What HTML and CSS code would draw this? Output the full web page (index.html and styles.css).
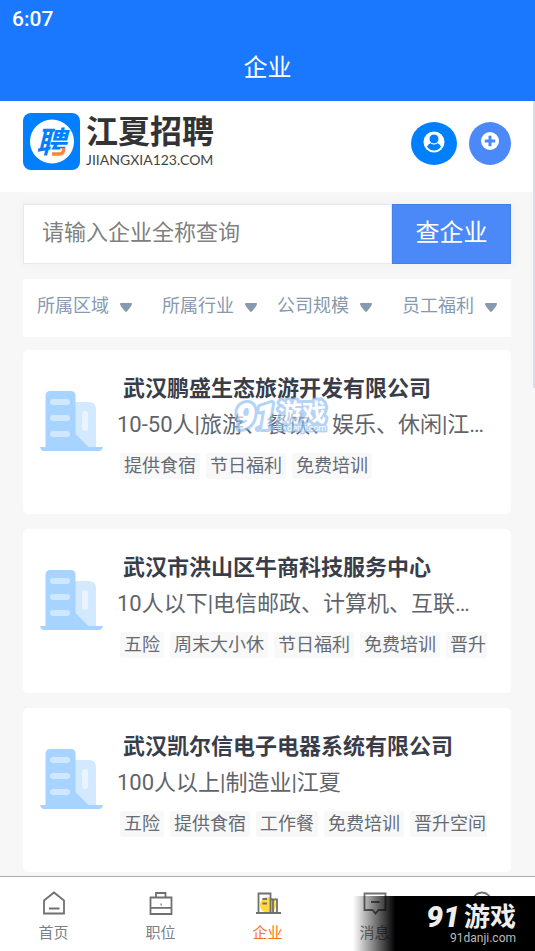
FILE: index.html
```html
<!DOCTYPE html>
<html lang="zh-CN">
<head>
<meta charset="utf-8">
<meta name="viewport" content="width=device-width, initial-scale=1">
<title>企业</title>
<link rel="stylesheet" href="styles.css">
</head>
<body>
<svg class="defs" aria-hidden="true">
  <symbol id="building" viewBox="0 0 63 60">
    <path fill="#d3e9ff" d="M35 11h14q7 0 7 7v39H35z"/>
    <path fill="#a6d3ff" d="M5.500 5q0-5 5-5h20q5 0 5 5v38l13 13H63q-1 4-4 4H4q-3 0-4-4h5.500z"/>
    <g fill="#d0e8ff"><rect x="10" y="8" width="20" height="6" rx="3"/><rect x="10" y="24" width="20" height="6" rx="3"/><rect x="10" y="40" width="20" height="6" rx="3"/></g>
    <rect x="42" y="20" width="6" height="20" rx="3" fill="#e9f4ff"/>
  </symbol>
  <symbol id="caret" viewBox="0 0 12 9"><path fill="#8799b0" d="M1 0h10q1.300 0 .9 1.200L11 3.200 7.200 8.200Q6 9.300 4.800 8.200L1 3.200.1 1.200Q-.3 0 1 0z"/></symbol>
</svg>
<div class="app">
  <header class="top">
    <div class="clock">6:07</div>
    <h1>企业</h1>
  </header>
  <main class="page">
    <section class="brand">
      <a class="logo" href="#">
        <svg class="logo-mark" viewBox="0 0 57 57" aria-hidden="true">
          <rect width="57" height="57" rx="8" fill="#0080ff"/>
          <circle cx="29" cy="28.500" r="22" fill="#fff"/>
          <text class="logo-glyph" x="13" y="40">聘</text>
          <path d="M29 41h7q3 0 3.500-2.500l.4-3" fill="none" stroke="#fff" stroke-width="5"/>
          <path d="M29 41h7.500q3.300 0 3.800-3l.4-3" fill="none" stroke="#ff8437" stroke-width="3.400"/>
        </svg>
        <span class="logo-text"><strong>江夏招聘</strong><small>JIIANGXIA123.COM</small></span>
      </a>
      <button class="round round-user" aria-label="用户">
        <svg width="22" height="22" viewBox="0 0 22 22"><circle cx="11" cy="11" r="10.500" fill="#fff"/><path fill="#0080ff" d="M4 15.500q1-2.500 4-3.500.7 1.200 3 1.200t3-1.200q3 1 4 3.500-2.500 4-7 4t-7-4z"/><circle cx="11" cy="8" r="5" fill="#0080ff" stroke="#fff" stroke-width="1"/></svg>
      </button>
      <button class="round round-add" aria-label="添加">
        <svg width="18" height="18" viewBox="0 0 18 18"><circle cx="9" cy="9" r="9" fill="#fff"/><path d="M9 3.800v10.400M3.800 9h10.400" stroke="#4b89f8" stroke-width="3"/></svg>
      </button>
    </section>
    <form class="search">
      <input type="text" placeholder="请输入企业全称查询" aria-label="请输入企业全称查询">
      <button type="button">查企业</button>
    </form>
    <section class="filters">
      <label><select aria-label="所属区域"><option>所属区域</option></select><svg class="caret"><use href="#caret"/></svg></label>
      <label><select aria-label="所属行业"><option>所属行业</option></select><svg class="caret"><use href="#caret"/></svg></label>
      <label><select aria-label="公司规模"><option>公司规模</option></select><svg class="caret"><use href="#caret"/></svg></label>
      <label><select aria-label="员工福利"><option>员工福利</option></select><svg class="caret"><use href="#caret"/></svg></label>
    </section>
    <section class="list">
      <article class="card">
        <svg class="building" aria-hidden="true"><use href="#building"/></svg>
        <div class="info">
          <h2>武汉鹏盛生态旅游开发有限公司</h2>
          <p>10-50人|旅游、餐饮、娱乐、休闲|江…</p>
          <div class="tags"><span>提供食宿</span><span>节日福利</span><span>免费培训</span></div>
        </div>
        <svg class="stamp" viewBox="0 0 98 42" aria-hidden="true">
          <path class="swoosh" d="M26 33q6-4 14-1"/>
          <text class="stamp-num" x="3" y="33">91</text>
          <text class="stamp-name" x="46" y="25">游戏</text>
          <text class="stamp-url" x="45" y="35">91danji.com</text>
        </svg>
      </article>
      <article class="card">
        <svg class="building" aria-hidden="true"><use href="#building"/></svg>
        <div class="info">
          <h2>武汉市洪山区牛商科技服务中心</h2>
          <p>10人以下|电信邮政、计算机、互联…</p>
          <div class="tags"><span>五险</span><span>周末大小休</span><span>节日福利</span><span>免费培训</span><span>晋升</span></div>
        </div>
      </article>
      <article class="card">
        <svg class="building" aria-hidden="true"><use href="#building"/></svg>
        <div class="info">
          <h2>武汉凯尔信电子电器系统有限公司</h2>
          <p>100人以上|制造业|江夏</p>
          <div class="tags"><span>五险</span><span>提供食宿</span><span>工作餐</span><span>免费培训</span><span>晋升空间</span></div>
        </div>
      </article>
    </section>
    <div class="scrollbar"></div>
  </main>
  <nav class="tabs">
    <a href="#"><svg viewBox="0 0 26 26"><path d="M3 10.500 13 2.500l10 8V23.500H3zM8 18.500h10.500"/></svg>首页</a>
    <a href="#"><svg viewBox="0 0 26 26"><path d="M2.500 7.500h21v16.500h-21zM8 7V3h9.500v4M2.500 17.800h21M12.500 14.500h1.200"/></svg>职位</a>
    <a href="#" class="active"><svg viewBox="0 0 26 26"><circle class="sun" cx="13" cy="15" r="8"/><path d="M1 23h25M3.500 23V3.500h12V23M18 23V9.500M15.500 9.500h6.500V23M15.500 3.500v6M7.500 9H12M7.500 13.500H12"/></svg>企业</a>
    <a href="#"><svg viewBox="0 0 26 26"><path d="M2.500 3.500h21v16.500H16.500l-3 3.500-3-3.500h-8zM9 12h8.500"/></svg>消息</a>
    <a href="#" aria-label="我的"><svg viewBox="0 0 26 26"><circle cx="13" cy="12" r="9.500"/></svg></a>
  </nav>
  <div class="watermark"><div class="mark-row"><b>91</b><strong>游戏</strong></div><small>91danji.com</small></div>
</div>
</body>
</html>
```
FILE: styles.css
```css
* { box-sizing: border-box; }
body, h1, h2, p { margin: 0; }
body {
  font-family: Roboto, "Noto Sans CJK SC", sans-serif;
  background: #f7f7f7;
  color: #666b73;
}
a { text-decoration: none; color: inherit; }
button, input, select { font: inherit; margin: 0; }
.defs { position: absolute; width: 0; height: 0; }

.app {
  position: relative;
  display: flex;
  flex-direction: column;
  height: 100vh;
  overflow: hidden;
}
.top { flex: none; background: #1a78ff; color: #fff; padding-bottom: 15px; }
.clock { padding: 6px 12px 0; font-size: 21px; line-height: 26px; font-weight: 500; }
h1 { margin-top: 18px; font-size: 24px; line-height: 36px; font-weight: 400; text-align: center; }

.page { position: relative; flex: 1; min-height: 0; overflow: hidden; }
.brand {
  display: flex;
  align-items: center;
  gap: 12px;
  padding: 12px 24px 22px 23px;
  background: #fff;
}
.logo { display: flex; gap: 6px; margin-right: auto; color: #333; }
.logo-mark { width: 57px; height: 57px; }
.logo-glyph { font-size: 30px; font-weight: 700; font-style: italic; fill: #0080ff; }
.logo-text { display: flex; flex-direction: column; }
.logo-text strong { font-size: 32px; line-height: 38px; }
.logo-text small { font-family: Lato, sans-serif; font-size: 14px; line-height: 18px; color: #444; }
.round {
  display: flex;
  justify-content: center;
  height: 43px;
  margin-top: 3px;
  padding: 9px 0 0;
  border: 0;
  border-radius: 50%;
}
.round-user { width: 46px; background: #0080ff; }
.round-add { width: 42px; padding-top: 10px; background: #4b89f8; }

.search {
  display: flex;
  height: 60px;
  margin: 12px 24px 15px 23px;
  box-shadow: 0 0 8px #ededf0;
}
.search input {
  flex: 1;
  min-width: 0;
  padding: 0 18px 4px;
  border: 1px solid #e6e8f0;
  border-radius: 0;
  background: #fff;
  font-size: 22px;
}
.search input::placeholder { color: #808080; opacity: 1; }
.search button {
  width: 119px;
  padding: 0 0 8px;
  border: 1px solid #447fe8;
  background: #4b89f8;
  color: #fff;
  font-size: 24px;
}

.filters {
  display: grid;
  grid-template-columns: 25fr 23fr 25fr 19fr;
  align-items: center;
  height: 58px;
  margin: 0 24px 13px 23px;
  padding: 0 14px 4px;
  background: #fff;
}
.filters label { display: flex; align-items: center; gap: 11px; }
.filters select {
  appearance: none;
  padding: 0;
  border: 0;
  background: none;
  color: #8799b0;
  font-size: 18px;
  line-height: 28px;
}
.caret { flex: none; width: 12px; height: 9px; margin-top: 2px; }

.list {
  display: grid;
  grid-template-columns: minmax(0, 1fr);
  gap: 15px;
  padding: 0 24px 0 23px;
}
.card {
  position: relative;
  display: flex;
  gap: 14px;
  padding: 20px 24px 35px 17px;
  border-radius: 5px;
  background: #fff;
}
.building { flex: none; width: 63px; height: 60px; margin-top: 21px; }
.info { flex: 1; min-width: 0; white-space: nowrap; }
h2 { padding-left: 6px; color: #393d49; font-size: 22px; line-height: 37px; font-weight: 700; }
.info p { font-size: 22px; line-height: 36px; color: #5f646b; }
.tags { display: flex; gap: 6px; margin: 10px 0 0 3px; overflow: hidden; }
.tags span {
  flex: none;
  padding: 0 4px;
  border-radius: 3px;
  background: #f8f8f8;
  font-size: 18px;
  line-height: 26px;
}
.scrollbar { position: absolute; top: 0; right: 0; width: 2px; height: 287px; background: #dadfe6; }

.tabs {
  flex: none;
  display: grid;
  grid-template-columns: repeat(5, 1fr);
  height: 75px;
  border-top: 1px solid #acacac;
  background: #fff;
}
.tabs a {
  display: flex;
  flex-direction: column;
  align-items: center;
  gap: 5px;
  padding-top: 13px;
  font-size: 15px;
  line-height: 24px;
  color: #7b7f86;
}
.tabs svg { width: 26px; height: 26px; fill: none; stroke: #707070; stroke-width: 1.8; }
.tabs .active { color: #ff7214; }
.tabs .sun { fill: #ffd93d; stroke: none; }

.stamp {
  position: absolute;
  top: 46px;
  left: 209px;
  width: 98px;
  height: 42px;
  overflow: visible;
  opacity: 0.65;
  fill: #fff;
  stroke: #8bbcf3;
  stroke-width: 6px;
  stroke-linejoin: round;
  paint-order: stroke;
}
.stamp .swoosh { fill: none; stroke-linecap: round; }
.stamp-num { font: italic 900 36px Roboto, sans-serif; }
.stamp-name { font-size: 24px; font-weight: 700; }
.stamp-url { font-size: 9px; stroke-width: 3px; }

.watermark {
  position: absolute;
  right: 0;
  bottom: 0;
  width: 182px;
  height: 55px;
  padding: 6px 19px 0 0;
  background: linear-gradient(90deg, transparent, #000 42px);
  color: #eee;
  text-align: right;
}
.mark-row { display: flex; justify-content: flex-end; align-items: center; gap: 4px; }
.watermark b { font: italic 900 30px/30px Roboto, sans-serif; }
.watermark strong { font-size: 26px; line-height: 30px; }
.watermark small { display: block; font-size: 12px; line-height: 13px; color: #bbb; }
```
